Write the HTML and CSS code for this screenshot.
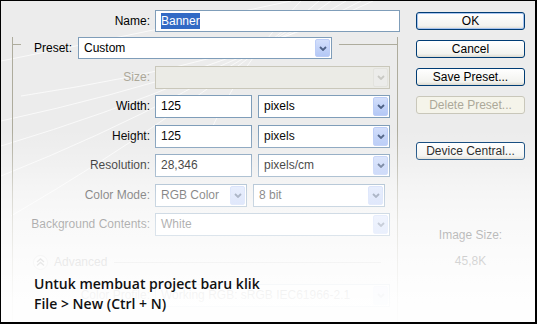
FILE: index.html
```html
<!DOCTYPE html>
<html lang="id">
<head>
    <meta charset="UTF-8">
    <title>New</title>
    <link rel="stylesheet" href="styles.css">
</head>
<body>
    <div class="dialog">
        <div class="main">
            <div class="name-row">
                <label class="lbl">Name:</label>
                <div class="input name-input"><span class="selected">Banner</span></div>
            </div>

            <div class="group">
                <div class="group-head">
                    <span class="rule rule-short"></span>
                    <label class="lbl head-lbl">Preset:</label>
                    <div class="combo preset">
                        <span class="combo-text">Custom</span>
                        <span class="combo-btn"><svg width="8" height="5" viewBox="0 0 8 5"><path d="M1 1l3 3 3-3" /></svg></span>
                    </div>
                    <span class="rule rule-long"></span>
                </div>

                <div class="fields">
                    <label class="lbl dim">Size:</label>
                    <div class="combo disabled wide">
                        <span class="combo-text"></span>
                        <span class="combo-btn"><svg width="8" height="5" viewBox="0 0 8 5"><path d="M1 1l3 3 3-3" /></svg></span>
                    </div>

                    <label class="lbl">Width:</label>
                    <div class="pair">
                        <div class="input num">125</div>
                        <div class="combo unit">
                            <span class="combo-text">pixels</span>
                            <span class="combo-btn"><svg width="8" height="5" viewBox="0 0 8 5"><path d="M1 1l3 3 3-3" /></svg></span>
                        </div>
                    </div>

                    <label class="lbl">Height:</label>
                    <div class="pair">
                        <div class="input num">125</div>
                        <div class="combo unit">
                            <span class="combo-text">pixels</span>
                            <span class="combo-btn"><svg width="8" height="5" viewBox="0 0 8 5"><path d="M1 1l3 3 3-3" /></svg></span>
                        </div>
                    </div>

                    <label class="lbl">Resolution:</label>
                    <div class="pair">
                        <div class="input num">28,346</div>
                        <div class="combo unit">
                            <span class="combo-text">pixels/cm</span>
                            <span class="combo-btn"><svg width="8" height="5" viewBox="0 0 8 5"><path d="M1 1l3 3 3-3" /></svg></span>
                        </div>
                    </div>

                    <label class="lbl">Color Mode:</label>
                    <div class="pair">
                        <div class="combo mode">
                            <span class="combo-text">RGB Color</span>
                            <span class="combo-btn"><svg width="8" height="5" viewBox="0 0 8 5"><path d="M1 1l3 3 3-3" /></svg></span>
                        </div>
                        <div class="combo unit">
                            <span class="combo-text">8 bit</span>
                            <span class="combo-btn"><svg width="8" height="5" viewBox="0 0 8 5"><path d="M1 1l3 3 3-3" /></svg></span>
                        </div>
                    </div>

                    <label class="lbl">Background Contents:</label>
                    <div class="combo wide">
                        <span class="combo-text">White</span>
                        <span class="combo-btn"><svg width="8" height="5" viewBox="0 0 8 5"><path d="M1 1l3 3 3-3" /></svg></span>
                    </div>
                </div>

                <div class="advanced">
                    <span class="adv-icon"><svg width="9" height="8" viewBox="0 0 9 8"><path d="M1 4l3.5-3 3.5 3M1 7.5l3.5-3 3.5 3" /></svg></span>
                    <span class="adv-text">Advanced</span>
                    <span class="rule rule-adv"></span>
                </div>

                <div class="fields profile">
                    <label class="lbl">Color Profile:</label>
                    <div class="combo wide">
                        <span class="combo-text">Working RGB:  sRGB IEC61966-2.1</span>
                        <span class="combo-btn"><svg width="8" height="5" viewBox="0 0 8 5"><path d="M1 1l3 3 3-3" /></svg></span>
                    </div>
                </div>
            </div>
        </div>

        <div class="side">
            <button class="btn default">OK</button>
            <button class="btn">Cancel</button>
            <button class="btn">Save Preset...</button>
            <button class="btn" disabled>Delete Preset...</button>
            <button class="btn device">Device Central...</button>
            <div class="size-info">
                <div>Image Size:</div>
                <div class="size-value">45,8K</div>
            </div>
        </div>

        <div class="fade">
            <p class="caption">Untuk membuat project baru klik<br>File &gt; New (Ctrl + N)</p>
        </div>
    </div>
</body>
</html>
```

FILE: styles.css
```css
body {
    margin: 0;
    font-family: "Liberation Sans", Arial, sans-serif;
    font-size: 12px;
    color: #000;
}
.dialog {
    position: relative;
    display: flex;
    width: 537px;
    height: 324px;
    box-sizing: border-box;
    border: 1px solid #000;
    border-right-width: 2px;
    border-bottom-width: 2px;
    background-color: #ececec;
    background-image: url("data:image/svg+xml;utf8,<svg xmlns='http://www.w3.org/2000/svg' width='537' height='324'><g fill='none' stroke='%23ffffff' stroke-opacity='0.7' stroke-width='1'><path d='M360 0 Q230 70 0 120'/><path d='M345 0 Q215 80 0 145'/><path d='M330 0 Q200 95 0 175'/><path d='M372 0 Q250 60 20 95'/><path d='M318 0 Q190 110 10 215'/><path d='M300 0 Q240 60 205 140'/><path d='M290 0 Q150 30 0 60'/></g></svg>");
    overflow: hidden;
}
.main {
    flex: none;
    width: 399px;
    box-sizing: border-box;
    padding: 9px 0 0 11px;
}
.lbl {
    text-align: right;
    white-space: nowrap;
    line-height: 23px;
}
.lbl.dim {
    color: #aca899;
}
.name-row {
    display: flex;
    height: 22px;
}
.name-row .lbl {
    width: 138px;
    line-height: 22px;
    margin-right: 5px;
}
.input {
    box-sizing: border-box;
    height: 22px;
    border: 1px solid #7f9db9;
    background: #fff;
    padding: 0 5px;
    line-height: 20px;
    white-space: nowrap;
}
.name-input {
    width: 245px;
}
.selected {
    background: #316ac5;
    color: #fff;
    padding: 1px 0;
}

/* group box */
.group {
    width: 386px;
    margin-top: 12px;
    box-sizing: border-box;
    border-left: 1px solid #aeac9d;
    border-right: 1px solid #aeac9d;
    height: 300px;
}
.group-head {
    display: flex;
    margin-top: -7px;
    height: 22px;
}
.rule {
    height: 1px;
    background: #aeac9d;
    margin-top: 7px;
}
.rule-short {
    width: 8px;
}
.head-lbl {
    margin-left: 13px;
    line-height: 22px;
}
.rule-long {
    flex: 1;
    margin-left: 7px;
}

/* combo boxes */
.combo {
    display: flex;
    box-sizing: border-box;
    height: 23px;
    border: 1px solid #7f9db9;
    background: #fff;
    padding: 1px;
}
.combo-text {
    flex: 1;
    padding-left: 4px;
    line-height: 19px;
    white-space: nowrap;
    overflow: hidden;
}
.combo-btn {
    width: 15px;
    display: flex;
    align-items: center;
    justify-content: center;
    box-sizing: border-box;
    border: 1px solid #bccdf7;
    border-radius: 2px;
    background: linear-gradient(#d3dffb, #b4c8f6);
}
.combo-btn svg path {
    fill: none;
    stroke: #4d6185;
    stroke-width: 1.8;
}
.preset {
    width: 254px;
    height: 22px;
    margin-left: 6px;
}
.preset .combo-text {
    line-height: 18px;
}
.combo.disabled {
    border-color: #c9c7ba;
    background: #ebebe6;
}
.combo.disabled .combo-btn {
    border-color: #e3e3de;
    background: #ececea;
}
.combo.disabled .combo-btn svg path {
    stroke: #c9c9c4;
}
.wide {
    width: 235px;
}

.fields {
    display: grid;
    grid-template-columns: 137px auto;
    grid-auto-rows: 23px;
    column-gap: 5px;
    row-gap: 6.4px;
    margin-top: 7px;
    justify-content: start;
}
.pair {
    display: flex;
    gap: 6px;
}
.num {
    width: 97px;
    height: 23px;
    line-height: 21px;
}
.unit {
    width: 132px;
}
.mode {
    width: 92px;
}

/* advanced */
.advanced {
    display: flex;
    align-items: center;
    margin: 19px 0 0 20px;
    height: 15px;
}
.adv-icon {
    width: 15px;
    height: 15px;
    box-sizing: border-box;
    border-radius: 50%;
    border: 1px solid #c9c9c9;
    background: #f4f4f4;
    display: flex;
    align-items: center;
    justify-content: center;
}
.adv-icon path {
    fill: none;
    stroke: #777;
    stroke-width: 1.4;
}
.adv-text {
    margin-left: 6px;
    color: #808080;
}
.rule-adv {
    flex: 1;
    margin: 0 16px 0 7px;
    background: #bdbdbd;
}
.profile {
    margin-top: 14px;
    opacity: 0.6;
}

/* right buttons */
.side {
    flex: none;
    width: 109px;
    margin-left: 16px;
    padding-top: 11px;
    display: flex;
    flex-direction: column;
}
.btn {
    height: 18px;
    margin-bottom: 10px;
    padding: 0;
    font-family: inherit;
    font-size: 12px;
    color: #000;
    border: 1px solid #003c74;
    border-radius: 3px;
    background: linear-gradient(#ffffff, #f3f3ef 80%, #dcdad0);
}
.btn.default {
    box-shadow: inset 0 0 0 1px #a8c4ee;
}
.btn:disabled {
    color: #aca899;
    border-color: #c9c7ba;
    background: #f5f4ea;
}
.btn.device {
    margin-top: 18px;
}
.size-info {
    margin-top: 58px;
    text-align: center;
    line-height: 14px;
}
.size-value {
    margin-top: 12px;
}

/* white fade with caption */
.fade {
    position: absolute;
    left: 0;
    right: 0;
    top: 129px;
    bottom: 0;
    background: linear-gradient(rgba(255, 255, 255, 0) 0%,
        rgba(255, 255, 255, 0.27) 18%,
        rgba(255, 255, 255, 0.53) 33%,
        rgba(255, 255, 255, 0.68) 48%,
        rgba(255, 255, 255, 0.82) 67%,
        rgba(255, 255, 255, 0.94) 88%,
        rgba(255, 255, 255, 0.97) 100%);
}
.caption {
    margin: 144px 0 0 33px;
    font-family: "Open Sans", "Noto Sans", sans-serif;
    font-weight: 600;
    font-size: 14px;
    line-height: 20px;
    color: #111;
}
```
